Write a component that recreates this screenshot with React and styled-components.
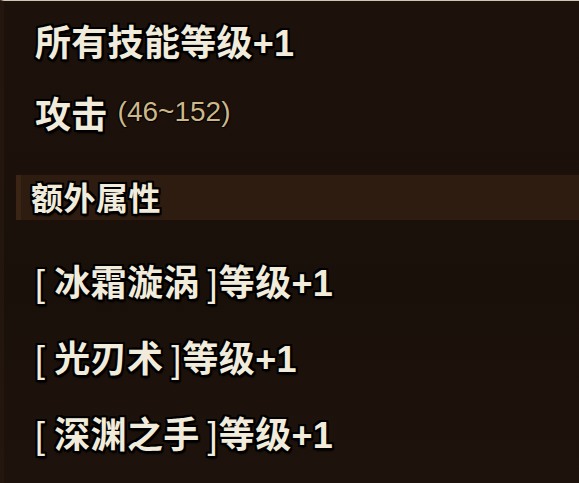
import React from "react";
import styled, { createGlobalStyle } from "styled-components";

const GlobalStyle = createGlobalStyle`
  html, body {
    margin: 0;
    padding: 0;
    background: #1c110b;
  }
  body {
    font-family: "Liberation Sans", "Noto Sans CJK SC", sans-serif;
  }
`;

const baseStats = [{ id: "all", label: "所有技能等级+1" }];

const extraStats = [
  { id: "frost", skill: "冰霜漩涡", bonus: "等级+1" },
  { id: "blade", skill: "光刃术", bonus: "等级+1" },
  { id: "abyss", skill: "深渊之手", bonus: "等级+1" },
];

const outline = `
  -2px -2px 0 #000, 2px -2px 0 #000, -2px 2px 0 #000, 2px 2px 0 #000,
  0 -2px 0 #000, 0 2px 0 #000, -2px 0 0 #000, 2px 0 0 #000,
  1px 3px 2px #000
`;

const Panel = styled.div`
  width: 579px;
  height: 483px;
  box-sizing: border-box;
  border-top: 1px solid #cfc6b4;
  border-left: 4px solid #22160e;
  background: linear-gradient(180deg, #1d120b 0%, #1a100a 60%, #1e130c 100%);
  padding-top: 3px;
  overflow: hidden;
`;

const Row = styled.div`
  display: flex;
  align-items: center;
  gap: 10px;
  height: ${(p) => p.$h || 72}px;
  padding-left: 31px;
  color: #f1ebdc;
  font-size: 36px;
  font-weight: 700;
  letter-spacing: 0.3px;
  text-shadow: ${outline};
  white-space: nowrap;
`;

const Range = styled.span`
  font-size: 28px;
  font-weight: 400;
  letter-spacing: 0;
  color: #cdb789;
  text-shadow: 1px 1px 1px #000, -1px 0 1px #000;
`;

const SectionHeader = styled.div`
  display: flex;
  align-items: center;
  height: 45px;
  margin: 27px 0 22px 12px;
  padding-left: 10px;
  padding-bottom: 4px;
  box-sizing: border-box;
  background: #2e1c10;
  border-left: 5px solid #3a2414;
  color: #f1ebdc;
  font-size: 32px;
  font-weight: 700;
  letter-spacing: 0.5px;
  text-shadow: ${outline};
`;

const Bracket = styled.span`
  font-weight: 400;
  margin: ${(p) => (p.$open ? "0 9px 0 0" : "0 1px 0 8px")};
`;

const ExtraRow = ({ skill, bonus }) => (
  <Row $h={76}>
    <span>
      <Bracket $open>[</Bracket>
      {skill}
      <Bracket>]</Bracket>
      {bonus}
    </span>
  </Row>
);

export default function App() {
  return (
    <>
      <GlobalStyle />
      <Panel>
        {baseStats.map((s) => (
          <Row key={s.id}>{s.label}</Row>
        ))}
        <Row>
          攻击
          <Range>(46~152)</Range>
        </Row>
        <SectionHeader>额外属性</SectionHeader>
        {extraStats.map((s) => (
          <ExtraRow key={s.id} skill={s.skill} bonus={s.bonus} />
        ))}
      </Panel>
    </>
  );
}
